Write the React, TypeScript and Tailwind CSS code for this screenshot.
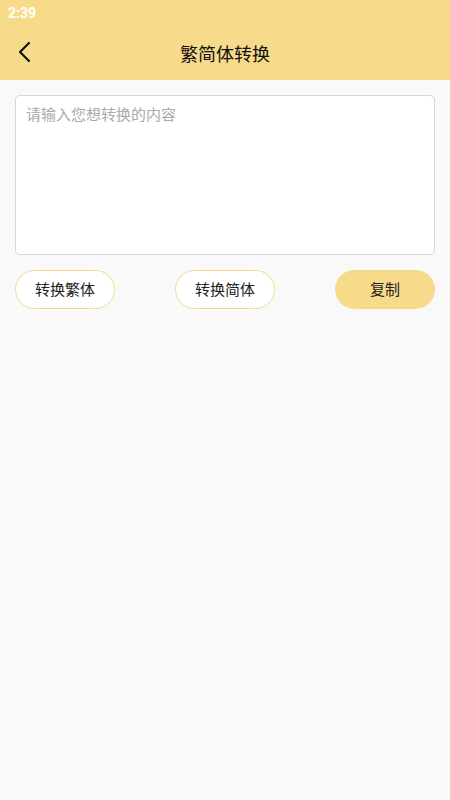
import React from "react";

export default function App() {
  const font = { fontFamily: '"Noto Sans CJK SC", "Noto Sans", sans-serif' };
  return (
    <div className="w-[450px] h-[800px] bg-[#f9f9f9] flex flex-col" style={font}>
      <div className="bg-[#f8db8a] h-[80px] flex flex-col">
        <div className="h-[26px] pl-[8px] flex items-center">
          <span className="text-white text-[14px] font-bold" style={{ fontFamily: '"Roboto", "Liberation Sans", sans-serif' }}>2:39</span>
        </div>
        <div className="relative flex-1 flex items-center justify-center">
          <svg className="absolute left-[17px] top-[15px]" width="16" height="22" viewBox="0 0 16 22" fill="none">
            <path d="M12 2 L3 11 L12 20" stroke="#111" strokeWidth="2.2" strokeLinecap="round" strokeLinejoin="round" />
          </svg>
          <span className="text-[18px] text-[#111] leading-none">繁简体转换</span>
        </div>
      </div>
      <div className="px-[15px] pt-[15px]">
        <div className="h-[160px] bg-white border border-[#d6d6d6] rounded-[5px] px-[10px] pt-[5px]">
          <span className="text-[15px] text-[#aaaaaa]">请输入您想转换的内容</span>
        </div>
        <div className="flex justify-between mt-[15px]">
          <button className="w-[100px] h-[39px] rounded-full border border-[#f8db8a] bg-white text-[15px] text-[#222]">转换繁体</button>
          <button className="w-[100px] h-[39px] rounded-full border border-[#f8db8a] bg-white text-[15px] text-[#222]">转换简体</button>
          <button className="w-[100px] h-[39px] rounded-full bg-[#f8db8a] text-[15px] text-[#222]">复制</button>
        </div>
      </div>
    </div>
  );
}
